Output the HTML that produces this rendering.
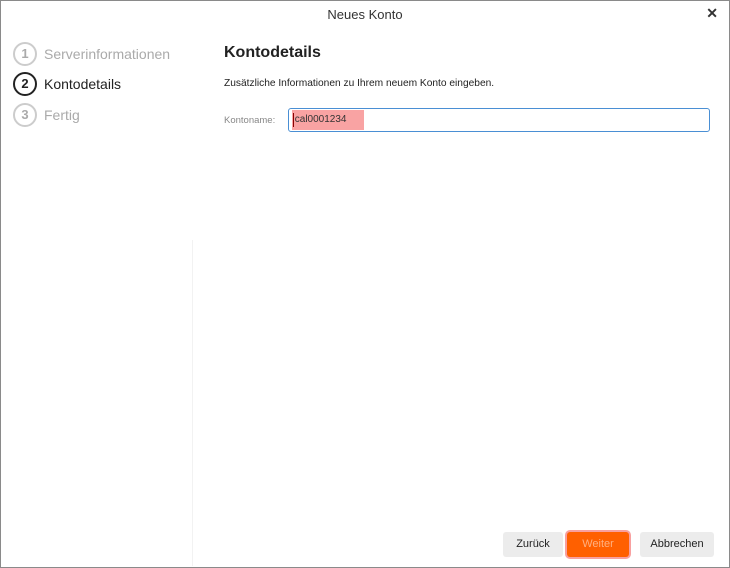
<!DOCTYPE html>
<html><head><style>
body{margin:0;width:730px;height:568px;overflow:hidden;background:#fff;font-family:"Liberation Sans",sans-serif;position:relative}
.win{position:absolute;left:0;top:0;width:728px;height:566px;border:1px solid #8a8a8a}
.title{position:absolute;top:7px;left:0;width:730px;text-align:center;font-size:13px;color:#333}
.x{position:absolute;right:12px;top:5px;font-size:14px;font-weight:bold;color:#333}
.step{position:absolute;left:13px;height:24px;display:flex;align-items:center;font-size:14px;color:#aaa}
.step .c{width:20px;height:20px;border:2px solid #ccc;border-radius:50%;text-align:center;line-height:20px;font-size:13px;font-weight:bold;margin-right:7px;color:#aaa}
.step.a{color:#222}.step.a .c{border-color:#222;color:#222}
.sep{position:absolute;left:192px;top:240px;width:1px;height:326px;background:#f2f2f2}
h1{position:absolute;left:224px;top:44px;margin:0;font-size:16px;font-weight:bold;color:#222}
.desc{position:absolute;left:224px;top:78px;font-size:10.2px;color:#222}
.lbl{position:absolute;left:224px;top:115px;font-size:9.5px;color:#888}
.inp{position:absolute;left:288px;top:108px;width:420px;height:22px;border:1px solid #4a8fd4;border-radius:3px}
.sel{position:absolute;left:3px;top:1px;width:72px;height:20px;background:#f9a3a3;font-size:10px;line-height:20px;color:#333}
.sel:before{content:"";position:absolute;left:1px;top:3px;width:1px;height:14px;background:#800}
.btn{position:absolute;top:532px;height:25px;border-radius:3px;font-size:11px;text-align:center;line-height:25px;background:#ececec;color:#222}
</style></head><body>
<div class="win"></div>
<div class="title">Neues Konto</div>
<div class="x">✕</div>
<div class="step" style="top:42px"><span class="c">1</span>Serverinformationen</div>
<div class="step a" style="top:72px"><span class="c">2</span>Kontodetails</div>
<div class="step" style="top:103px"><span class="c">3</span>Fertig</div>
<div class="sep"></div>
<h1>Kontodetails</h1>
<div class="desc">Zusätzliche Informationen zu Ihrem neuem Konto eingeben.</div>
<div class="lbl">Kontoname:</div>
<div class="inp"><div class="sel">&nbsp;cal0001234</div></div>
<div class="btn" style="left:503px;width:60px">Zurück</div>
<div class="btn" style="left:567px;width:62px;background:#ff6000;color:#ffb080;box-shadow:0 0 0 2px #f8a0a0">Weiter</div>
<div class="btn" style="left:640px;width:74px">Abbrechen</div>
</body></html>
